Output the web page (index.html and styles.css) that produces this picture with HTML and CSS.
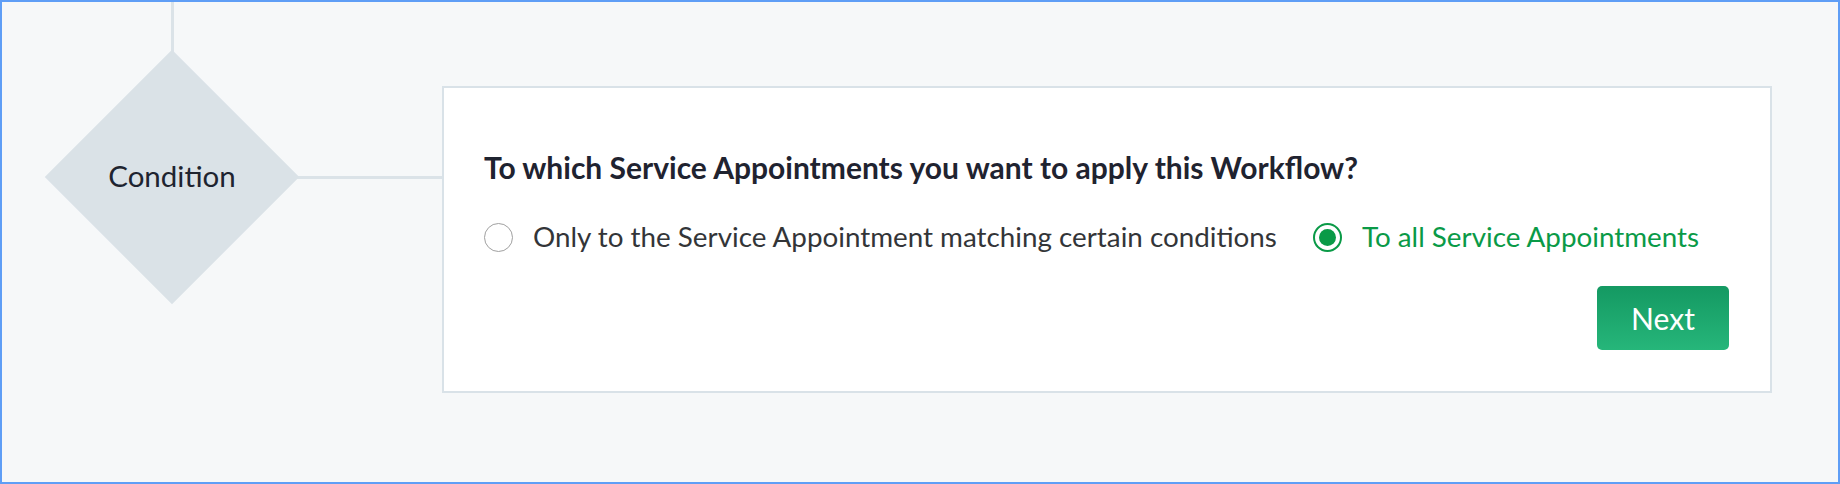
FILE: index.html
```html
<!DOCTYPE html>
<html lang="en">
<head>
<meta charset="utf-8">
<title>Workflow condition</title>
<link rel="stylesheet" href="styles.css">
</head>
<body>
<div class="frame">
  <div class="canvas">
    <div class="node-col">
      <div class="v-line"></div>
      <div class="diamond-box">
        <div class="diamond"></div>
        <span class="diamond-label">Condition</span>
      </div>
    </div>
    <div class="h-line"></div>
    <div class="card">
      <h2 class="question">To which Service Appointments you want to apply this Workflow?</h2>
      <div class="options">
        <label class="option">
          <span class="radio"></span>
          <span class="option-text">Only to the Service Appointment matching certain conditions</span>
        </label>
        <label class="option option-selected">
          <span class="radio radio-on"><span class="radio-dot"></span></span>
          <span class="option-text">To all Service Appointments</span>
        </label>
      </div>
      <div class="actions">
        <button class="btn-next" type="button">Next</button>
      </div>
    </div>
  </div>
</div>
</body>
</html>
```

FILE: styles.css
```css
* { box-sizing: border-box; }
html, body {
  margin: 0;
  padding: 0;
  background: #f6f8f9;
}
body {
  font-family: Lato, "Open Sans", sans-serif;
}
.frame {
  width: 1840px;
  height: 484px;
  border: 2px solid #5f9ef6;
  background: #f6f8f9;
  overflow: hidden;
}
.canvas {
  display: flex;
  align-items: flex-start;
  padding-left: 43px;
}
.node-col {
  width: 254px;
  display: flex;
  flex-direction: column;
  align-items: center;
  flex: none;
}
.v-line {
  width: 3px;
  height: 50px;
  background: #dbe3e8;
}
.diamond-box {
  width: 254px;
  height: 254px;
  position: relative;
  margin-top: -2px;
  display: flex;
  align-items: center;
  justify-content: center;
}
.diamond {
  position: absolute;
  left: 37px;
  top: 37px;
  width: 180px;
  height: 180px;
  background: #dae2e7;
  transform: rotate(45deg);
}
.diamond-label {
  position: relative;
  font-size: 29.5px;
  line-height: 36px;
  color: #1e2430;
  margin-top: -3px;
}
.h-line {
  width: 145px;
  height: 3px;
  margin-top: 174px;
  margin-left: -2px;
  background: #dbe3e8;
  flex: none;
}
.card {
  width: 1330px;
  height: 307px;
  margin-top: 84px;
  background: #ffffff;
  border: 2px solid #d9e2e8;
  padding: 61px 41px 0 40px;
  flex: none;
  display: flex;
  flex-direction: column;
}
.question {
  margin: 0;
  font-size: 30px;
  line-height: 36px;
  font-weight: 700;
  color: #1f2330;
}
.options {
  display: flex;
  align-items: center;
  gap: 36px;
  margin-top: 35px;
}
.option {
  display: flex;
  align-items: center;
  gap: 20px;
  font-size: 27.8px;
  line-height: 34px;
  color: #333538;
}
.option-selected { color: #0a9a47; }
.radio {
  width: 29px;
  height: 29px;
  border-radius: 50%;
  border: 1.5px solid #a0a0a0;
  background: #fff;
  display: flex;
  align-items: center;
  justify-content: center;
  flex: none;
}
.radio-on {
  border: 2.5px solid #0a9a47;
}
.radio-dot {
  width: 17px;
  height: 17px;
  border-radius: 50%;
  background: #0a9a47;
}
.actions {
  display: flex;
  justify-content: flex-end;
  margin-top: 32px;
}
.btn-next {
  width: 132px;
  height: 64px;
  border: none;
  border-radius: 5px;
  background: linear-gradient(180deg, #149962 0%, #26b67a 100%);
  color: #ffffff;
  font-family: Lato, "Open Sans", sans-serif;
  font-size: 30px;
  line-height: 36px;
  padding: 0;
}
```
